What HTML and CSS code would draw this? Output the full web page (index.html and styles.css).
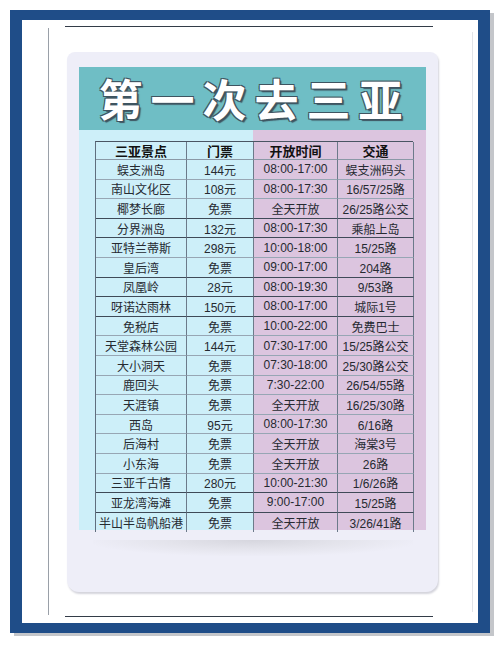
FILE: index.html
```html
<!DOCTYPE html>
<html lang="zh">
<head>
<meta charset="utf-8">
<link rel="stylesheet" href="styles.css">
</head>
<body>
<div class="frame">
  <div class="sheet">
    <div class="marks">
      <div class="card">
        <div class="title">第一次去三亚</div>
        <div class="tablezone">
          <div class="grid">
            <div class="c h">三亚景点</div><div class="c h">门票</div><div class="c h">开放时间</div><div class="c h">交通</div>
            <div class="c">蜈支洲岛</div><div class="c">144元</div><div class="c">08:00-17:00</div><div class="c">蜈支洲码头</div>
            <div class="c">南山文化区</div><div class="c">108元</div><div class="c">08:00-17:30</div><div class="c">16/57/25路</div>
            <div class="c dk">椰梦长廊</div><div class="c dk">免票</div><div class="c dk">全天开放</div><div class="c dk">26/25路公交</div>
            <div class="c dk">分界洲岛</div><div class="c dk">132元</div><div class="c dk">08:00-17:30</div><div class="c dk">乘船上岛</div>
            <div class="c">亚特兰蒂斯</div><div class="c">298元</div><div class="c">10:00-18:00</div><div class="c">15/25路</div>
            <div class="c dk">皇后湾</div><div class="c dk">免票</div><div class="c dk">09:00-17:00</div><div class="c dk">204路</div>
            <div class="c dk">凤凰岭</div><div class="c dk">28元</div><div class="c dk">08:00-19:30</div><div class="c dk">9/53路</div>
            <div class="c dk">呀诺达雨林</div><div class="c dk">150元</div><div class="c dk">08:00-17:00</div><div class="c dk">城际1号</div>
            <div class="c">免税店</div><div class="c">免票</div><div class="c">10:00-22:00</div><div class="c">免费巴士</div>
            <div class="c">天堂森林公园</div><div class="c">144元</div><div class="c">07:30-17:00</div><div class="c">15/25路公交</div>
            <div class="c">大小洞天</div><div class="c">免票</div><div class="c">07:30-18:00</div><div class="c">25/30路公交</div>
            <div class="c">鹿回头</div><div class="c">免票</div><div class="c">7:30-22:00</div><div class="c">26/54/55路</div>
            <div class="c">天涯镇</div><div class="c">免票</div><div class="c">全天开放</div><div class="c">16/25/30路</div>
            <div class="c">西岛</div><div class="c">95元</div><div class="c">08:00-17:30</div><div class="c">6/16路</div>
            <div class="c">后海村</div><div class="c">免票</div><div class="c">全天开放</div><div class="c">海棠3号</div>
            <div class="c">小东海</div><div class="c">免票</div><div class="c">全天开放</div><div class="c">26路</div>
            <div class="c dk">三亚千古情</div><div class="c dk">280元</div><div class="c dk">10:00-21:30</div><div class="c dk">1/6/26路</div>
            <div class="c dk">亚龙湾海滩</div><div class="c dk">免票</div><div class="c dk">9:00-17:00</div><div class="c dk">15/25路</div>
            <div class="c last">半山半岛帆船港</div><div class="c last">免票</div><div class="c last">全天开放</div><div class="c last">3/26/41路</div>
          </div>
        </div>
        <div class="papershadow"></div>
      </div>
    </div>
  </div>
</div>
</body>
</html>
```
FILE: styles.css
```css
html, body {
  margin: 0;
  padding: 0;
  background: #ffffff;
}
body {
  width: 500px;
  height: 646px;
  overflow: hidden;
  font-family: "Liberation Sans", "Noto Sans CJK SC", sans-serif;
}
.frame {
  margin: 10px 0 0 10px;
  width: 480px;
  height: 623px;
  box-sizing: border-box;
  padding: 10px 12px 10px 12px;
  background: #1f4d88;
  box-shadow: 4px 3px 0 #c4c6ca;
}
.sheet {
  width: 456px;
  height: 603px;
  background: #ffffff;
  position: relative;
  padding-top: 8px;
  box-sizing: border-box;
}
.sheet::before {
  content: "";
  position: absolute;
  left: 43px;
  width: 368px;
  top: 6px;
  height: 589px;
  border-top: 1.5px solid #333c48;
  border-bottom: 1.5px solid #333c48;
}
.sheet::after {
  content: "";
  position: absolute;
  left: 450px;
  top: 12px;
  height: 580px;
  border-left: 1px solid #e2e4e8;
}
.marks {
  margin-left: 26px;
  height: 587px;
  box-sizing: border-box;
  padding-top: 24px;
  border-left: 1px solid #9aa0a8;
}
.card {
  margin-left: 18px;
  width: 371px;
  height: 540px;
  box-sizing: border-box;
  padding: 15px 12px 0 12px;
  background: #eeeef8;
  border-radius: 8px 8px 12px 12px;
  box-shadow: 1px 2px 2px #d4d4dc;
}
.title {
  height: 63px;
  background: #6fbec5;
  color: #ffffff;
  font-family: "Noto Sans CJK SC", sans-serif;
  font-weight: 700;
  font-size: 44px;
  line-height: 63px;
  letter-spacing: 8px;
  text-align: center;
  padding-left: 4px;
  text-shadow: 1px 1px 0 #3e5460, -1px -1px 0 #3e5460, 1px -1px 0 #3e5460, -1px 1px 0 #3e5460, 2px 2px 1px #3e5460;
}
.tablezone {
  height: 400px;
  box-sizing: border-box;
  padding: 11px 0 0 16px;
  background: linear-gradient(to right, #cdeff9 0, #cdeff9 174px, #dcc5df 174px, #dcc5df 100%);
}
.grid {
  display: grid;
  grid-template-columns: 91px 67px 84px 76px;
  grid-template-rows: 18px repeat(19, 19.6px);
  border-left: 1px solid #5f6e7e;
  border-top: 1px solid #4a5563;
  width: 318px;
  box-sizing: border-box;
}
.c {
  border-right: 1px solid #6c7a8a;
  border-bottom: 1px solid #97a6b4;
  font-size: 12px;
  color: #262a31;
  text-align: center;
  display: flex;
  align-items: center;
  justify-content: center;
  white-space: nowrap;
  overflow: hidden;
}
.c.h {
  font-family: "Noto Sans CJK SC", sans-serif;
  font-weight: 700;
  font-size: 13px;
  color: #111111;
  border-bottom-color: #8a98a6;
}
.c.dk {
  border-bottom-color: #3f4a58;
}
.c.last {
  border-bottom: none;
}
.papershadow {
  margin: 10px auto 0 auto;
  width: 320px;
  height: 16px;
  background: radial-gradient(ellipse at 50% 0%, #d6d6de 0%, #e4e4ec 40%, rgba(238,238,248,0) 75%);
}
```
